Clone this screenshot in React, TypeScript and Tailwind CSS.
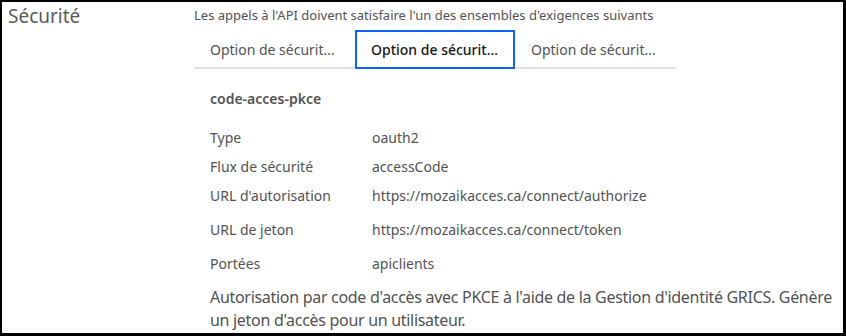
import React from "react";

const rows = [
  { label: "Type", value: "oauth2", h: "h-[29px]" },
  { label: "Flux de sécurité", value: "accessCode", h: "h-[29px]" },
  { label: "URL d'autorisation", value: "https://mozaikacces.ca/connect/authorize", h: "h-[34px]" },
  { label: "URL de jeton", value: "https://mozaikacces.ca/connect/token", h: "h-[34px]" },
  { label: "Portées", value: "apiclients", h: "h-[34px]" },
];

export default function App() {
  return (
    <div
      className="w-[846px] h-[336px] bg-white border-l-2 border-t-2 border-r-[3px] border-b-[3px] border-black flex overflow-hidden text-[#525252]"
      style={{ fontFamily: "'Noto Sans', Roboto, sans-serif" }}
    >
      <div className="w-[192px] shrink-0 pl-[6px] pt-[1px] text-[19px] leading-[26px] text-[#5b5b5b]">
        Sécurité
      </div>
      <div className="flex flex-col">
        <p className="text-[13px] leading-[18px] pt-[4px]">
          Les appels à l'API doivent satisfaire l'un des ensembles d'exigences suivants
        </p>
        <div className="flex w-[482px] mt-[6px] border-b-2 border-[#e0e0e0] h-[39px]">
          <div className="w-[161px] h-[39px] px-4 flex items-center text-[14px] whitespace-nowrap">
            Option de sécurit...
          </div>
          <div className="w-[160px] h-[39px] px-[14px] flex items-center text-[14px] font-medium text-[#161616] border-2 border-[#0f62fe] whitespace-nowrap">
            Option de sécurit...
          </div>
          <div className="w-[161px] h-[39px] px-4 flex items-center text-[14px] whitespace-nowrap">
            Option de sécurit...
          </div>
        </div>
        <div className="pl-4">
          <p className="text-[14px] font-semibold leading-[20px] mt-[20px] mb-[19px]">code-acces-pkce</p>
          {rows.map((r) => (
            <div key={r.label} className={`flex items-start text-[14px] leading-[20px] ${r.h}`}>
              <span className="w-[162px] shrink-0">{r.label}</span>
              <span>{r.value}</span>
            </div>
          ))}
          <p className="text-[16px] leading-[23px] tracking-[-0.3px] -mt-[2px]">
            Autorisation par code d'accès avec PKCE à l'aide de la Gestion d'identité GRICS. Génère un jeton
            d'accès pour un utilisateur.
          </p>
        </div>
      </div>
    </div>
  );
}
